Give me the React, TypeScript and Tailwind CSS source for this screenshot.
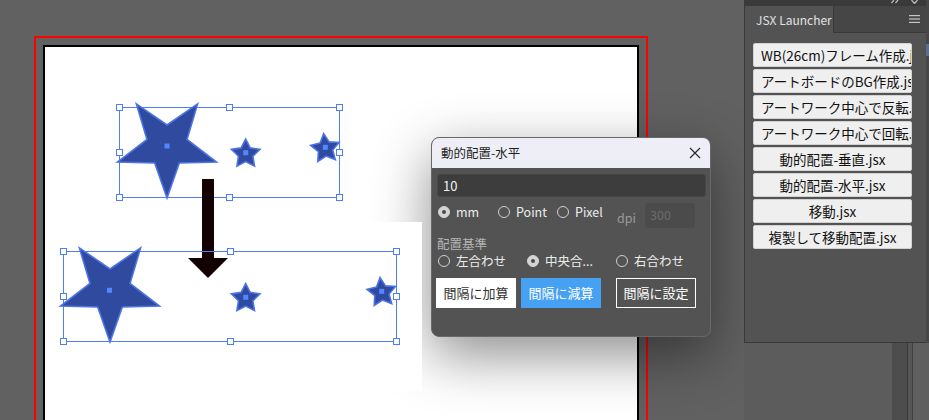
import React from "react";

const launcherItems = [
  { name: "WB(26cm)フレーム作成.jsx", left: true },
  { name: "アートボードのBG作成.jsx", left: true },
  { name: "アートワーク中心で反転.jsx", left: true },
  { name: "アートワーク中心で回転.jsx", left: true },
  { name: "動的配置-垂直.jsx", left: false },
  { name: "動的配置-水平.jsx", left: false },
  { name: "移動.jsx", left: false },
  { name: "複製して移動配置.jsx", left: false },
];

const SEL = "#4d7ef2";

function starPoints(cx: number, cy: number, R: number, r: number, rot: number) {
  const pts: string[] = [];
  for (let i = 0; i < 10; i++) {
    const a = ((rot + i * 36) * Math.PI) / 180;
    const rad = i % 2 === 0 ? R : r;
    pts.push(`${(cx + rad * Math.sin(a)).toFixed(1)},${(cy - rad * Math.cos(a)).toFixed(1)}`);
  }
  return pts.join(" ");
}

function Selection({ x1, y1, x2, y2 }: { x1: number; y1: number; x2: number; y2: number }) {
  const mx = (x1 + x2) / 2;
  const my = (y1 + y2) / 2;
  const handles = [
    [x1, y1], [mx, y1], [x2, y1],
    [x1, my], [x2, my],
    [x1, y2], [mx, y2], [x2, y2],
  ];
  return (
    <g>
      <rect x={x1 + 0.5} y={y1 + 0.5} width={x2 - x1} height={y2 - y1} fill="none" stroke={SEL} strokeWidth="1" />
      {handles.map(([hx, hy], i) => (
        <rect key={i} x={Math.round(hx) - 2.5} y={Math.round(hy) - 2.5} width="6" height="6" fill="#fff" stroke={SEL} strokeWidth="1" />
      ))}
    </g>
  );
}

function Star({ cx, cy, R, r, rot, mx, my }: { cx: number; cy: number; R: number; r: number; rot: number; mx: number; my: number }) {
  return (
    <g>
      <polygon points={starPoints(cx, cy, R, r, rot)} fill="#2f4a9e" stroke="#4c74e4" strokeWidth="1.6" strokeLinejoin="miter" />
      <rect x={mx - 2.5} y={my - 2.5} width="5" height="5" fill="#4f88ff" />
    </g>
  );
}

function Radio({ checked }: { checked?: boolean }) {
  return checked ? (
    <span className="w-[12px] h-[12px] rounded-full bg-[#d4d4d4] border border-[#d4d4d4] flex items-center justify-center shrink-0">
      <span className="w-[4px] h-[4px] rounded-full bg-[#4a4a4a]" />
    </span>
  ) : (
    <span className="w-[12px] h-[12px] rounded-full border border-[#cfcfcf] shrink-0" />
  );
}

function RadioItem({ label, checked, width }: { label: string; checked?: boolean; width: string }) {
  return (
    <div className={`${width} h-[18px] flex items-center gap-[6px] text-[12.5px] text-[#ececec]`}>
      <Radio checked={checked} />
      <span>{label}</span>
    </div>
  );
}

export default function App() {
  return (
    <div className="relative w-[929px] h-[420px] overflow-hidden bg-[#616161] flex font-['Noto_Sans_CJK_JP',sans-serif]">
      {/* canvas */}
      <div className="w-[744px] shrink-0 pt-[36px] pl-[34px]">
        <div className="w-[614px] h-[384px] border-2 border-b-0 border-[#ff0000] pt-[7px] px-[7px]">
          <div className="relative h-full border-2 border-b-0 border-black bg-white">
            <div className="absolute left-0 top-[175px] w-[377px] h-[169px] bg-white z-[2]" />
            <svg className="absolute left-0 top-0 z-[3]" width="592" height="373" viewBox="45 47 592 373">
              <Selection x1={119} y1={107} x2={339} y2={197} />
              <Star cx={167} cy={146} R={52} r={21} rot={180} mx={167} my={146} />
              <Star cx={245.7} cy={154} R={15} r={7.6} rot={0} mx={245.7} my={152.7} />
              <Star cx={325.3} cy={148.5} R={15} r={7.6} rot={-6} mx={325.3} my={147.3} />

              <rect x="202" y="179" width="12" height="79" fill="#140202" />
              <polygon points="188,258 228,258 208,278" fill="#140202" />

              <Selection x1={63} y1={251} x2={396} y2={341} />
              <Star cx={110} cy={290} R={52} r={21} rot={180} mx={109.5} my={290.3} />
              <Star cx={245.7} cy={298.5} R={15} r={7.6} rot={0} mx={245.7} my={297.3} />
              <Star cx={381.7} cy={292.5} R={15} r={7.6} rot={-6} mx={381.7} my={291.3} />
            </svg>
          </div>
        </div>
      </div>

      {/* JSX Launcher panel */}
      <div className="relative z-[5] w-[182px] shrink-0 flex flex-col">
        <div className="h-[6px] bg-[#3a3a3a] overflow-hidden flex justify-end items-start gap-[12px] pr-[8px]">
          <svg width="8" height="6" viewBox="0 0 8 6">
            <path d="M3 0L0.5 3M7 0L4.5 3" stroke="#bdbdbd" strokeWidth="1.2" fill="none" />
          </svg>
          <svg width="7" height="6" viewBox="0 0 7 6">
            <path d="M0.5 0L3.5 3.5M6.5 0L3.5 3.5" stroke="#bdbdbd" strokeWidth="1.2" fill="none" />
          </svg>
        </div>
        <div className="h-[27px] flex bg-[#464646]">
          <div className="w-[89px] shrink-0 bg-[#535353] border-l border-[#393939] flex items-center pl-[11px] text-[12px] text-[#e2e2e2] whitespace-nowrap">
            JSX Launcher
          </div>
          <div className="flex-1 border-l border-b border-[#393939] flex items-center justify-end pr-[6px]">
            <svg width="11" height="8" viewBox="0 0 11 8">
              <rect x="0" y="0" width="11" height="1.2" fill="#c6c6c6" />
              <rect x="0" y="3.4" width="11" height="1.2" fill="#c6c6c6" />
              <rect x="0" y="6.8" width="11" height="1.2" fill="#c6c6c6" />
            </svg>
          </div>
        </div>
        <div className="h-[310px] bg-[#535353] border-l border-b border-[#393939] pt-[10px] pl-[8px] flex flex-col gap-[2px]">
          {launcherItems.map((item) => (
            <button
              key={item.name}
              className={`w-[159px] h-[24px] shrink-0 rounded-[2px] bg-[#efefef] border border-[#d2d2d2] overflow-hidden whitespace-nowrap flex items-center text-[13.5px] text-[#111] ${
                item.left ? "justify-start pl-[7px]" : "justify-center"
              }`}
            >
              {item.name}
            </button>
          ))}
        </div>
        <div className="flex-1 flex">
          <div className="w-[148px] bg-[#5c5c5c]" />
          <div className="w-[16px] bg-[#4d4d4d] border-r border-[#3a3a3a]" />
          <div className="w-[5px] bg-[#575757] border-r border-[#3f3f3f]" />
          <div className="flex-1 bg-[#5f5f5f]" />
        </div>
      </div>
      <div className="relative z-[5] w-[3px] shrink-0 flex flex-col bg-[#5f5f5f]">
        <div className="h-[343px] bg-[#474747] pt-[44px]">
          <div className="h-[12px] bg-[#5a6f90]" />
        </div>
      </div>

      {/* dialog shadow */}
      <div className="absolute left-[431px] top-[137px] w-[280px] h-[200px] rounded-lg shadow-[0_18px_56px_rgba(0,0,0,0.45)] z-[1]" />

      {/* dialog */}
      <div className="absolute left-[431px] top-[137px] w-[280px] h-[200px] z-[4] rounded-lg overflow-hidden border border-[#686868] bg-[#535353] flex flex-col">
        <div className="h-[30px] shrink-0 bg-[#eeeef6] flex items-center justify-between pl-[9px] pr-[9px]">
          <span className="text-[12.5px] text-[#1e1e1e]">動的配置-水平</span>
          <svg width="12" height="12" viewBox="0 0 12 12">
            <path d="M1 1L11 11M11 1L1 11" stroke="#2a2a2a" strokeWidth="1.2" />
          </svg>
        </div>
        <div className="flex flex-col px-[5px]">
          <div className="mt-[6px] h-[23px] w-[269px] rounded-[3px] bg-[#3d3d3d] border border-[#474747] flex items-center pl-[5px] text-[13px] text-[#f2f2f2]">
            10
          </div>
          <div className="mt-[6px] h-[25px] flex items-start pl-[1px]">
            <RadioItem label="mm" checked width="w-[60px]" />
            <RadioItem label="Point" width="w-[59px]" />
            <RadioItem label="Pixel" width="w-[60px]" />
            <span className="w-[28px] mt-[6px] h-[18px] flex items-center text-[12.5px] text-[#9a9a9a]">dpi</span>
            <div className="w-[50px] h-[25px] rounded-[3px] bg-[#4b4b4b] flex items-center pl-[5px] text-[12.5px] text-[#6c6c6c]">300</div>
          </div>
          <div className="mt-[8px] h-[16px] flex items-center text-[12.5px] text-[#b5b5b5]">配置基準</div>
          <div className="flex items-center pl-[1px]">
            <RadioItem label="左合わせ" width="w-[90px]" />
            <RadioItem label="中央合..." checked width="w-[90px]" />
            <RadioItem label="右合わせ" width="w-[90px]" />
          </div>
          <div className="mt-[8px] flex -ml-[1px]">
            <button className="w-[80px] h-[30px] bg-white text-[13px] text-[#333] flex items-center justify-center">間隔に加算</button>
            <button className="ml-[5px] w-[80px] h-[30px] bg-[#46a1f3] text-[13px] text-white flex items-center justify-center">間隔に減算</button>
            <button className="ml-[15px] w-[80px] h-[30px] border border-white text-[13px] text-white flex items-center justify-center">間隔に設定</button>
          </div>
        </div>
      </div>
    </div>
  );
}
